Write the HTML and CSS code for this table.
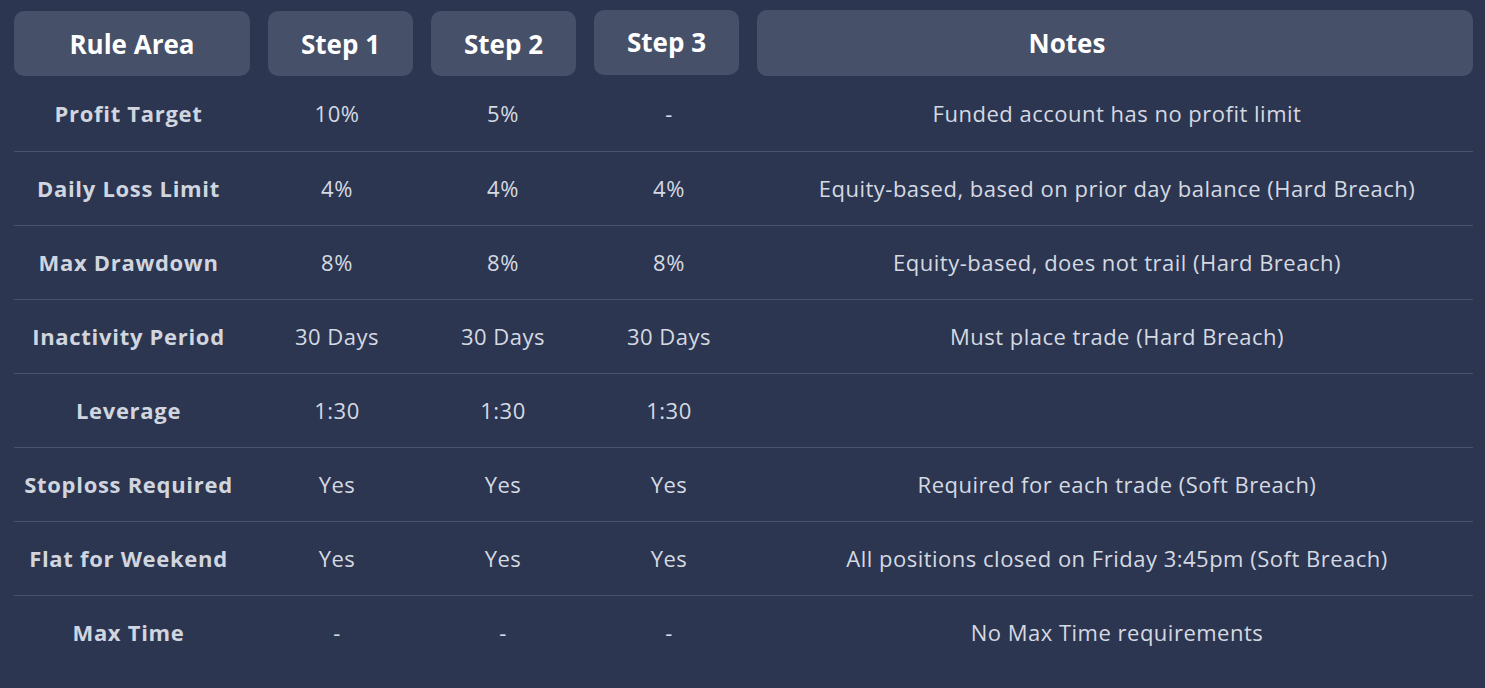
FILE: index.html
```html
<!DOCTYPE html>
<html>
<head>
<meta charset="utf-8">
<link rel="stylesheet" href="styles.css">
</head>
<body>
<div class="page">
  <div class="head">
    <div class="hcell h-rule">Rule Area</div>
    <div class="hcell h-step">Step 1</div>
    <div class="hcell h-step">Step 2</div>
    <div class="hcell h-step h-up">Step 3</div>
    <div class="hcell h-notes">Notes</div>
  </div>
  <div class="rows">
    <div class="row first"><div class="c lab">Profit Target</div><div class="c">10%</div><div class="c">5%</div><div class="c">-</div><div class="c note">Funded account has no profit limit</div></div>
    <div class="row"><div class="c lab">Daily Loss Limit</div><div class="c">4%</div><div class="c">4%</div><div class="c">4%</div><div class="c note">Equity-based, based on prior day balance (Hard Breach)</div></div>
    <div class="row"><div class="c lab">Max Drawdown</div><div class="c">8%</div><div class="c">8%</div><div class="c">8%</div><div class="c note">Equity-based, does not trail (Hard Breach)</div></div>
    <div class="row"><div class="c lab">Inactivity Period</div><div class="c">30 Days</div><div class="c">30 Days</div><div class="c">30 Days</div><div class="c note">Must place trade (Hard Breach)</div></div>
    <div class="row"><div class="c lab">Leverage</div><div class="c">1:30</div><div class="c">1:30</div><div class="c">1:30</div><div class="c note"></div></div>
    <div class="row"><div class="c lab">Stoploss Required</div><div class="c">Yes</div><div class="c">Yes</div><div class="c">Yes</div><div class="c note">Required for each trade (Soft Breach)</div></div>
    <div class="row"><div class="c lab">Flat for Weekend</div><div class="c">Yes</div><div class="c">Yes</div><div class="c">Yes</div><div class="c note">All positions closed on Friday 3:45pm (Soft Breach)</div></div>
    <div class="row last"><div class="c lab">Max Time</div><div class="c">-</div><div class="c">-</div><div class="c">-</div><div class="c note">No Max Time requirements</div></div>
  </div>
</div>
</body>
</html>
```

FILE: styles.css
```css
html, body {
  margin: 0;
  padding: 0;
  background: #2c3650;
  height: 100%;
}
body {
  font-family: "Open Sans", "DejaVu Sans", sans-serif;
  color: #d3d8e2;
}
.page {
  padding: 10px 12px 0 14px;
}
.head {
  display: flex;
  gap: 18px;
  align-items: flex-start;
}
.hcell {
  background: #465069;
  border-radius: 10px;
  height: 65px;
  margin-top: 1px;
  display: flex;
  align-items: center;
  justify-content: center;
  color: #ffffff;
  font-weight: 700;
  font-size: 26px;
}
.h-rule { width: 236px; }
.h-step { width: 145px; }
.h-up { margin-top: 0; padding-bottom: 2px; height: 63px; }
.h-notes { flex: 1; padding-right: 96px; margin-top: 0; height: 66px; }
.rows {
  display: flex;
  flex-direction: column;
}
.row {
  display: grid;
  grid-template-columns: 240px 166px 166px 166px 1fr;
  height: 71px;
  padding-bottom: 2px;
  border-bottom: 1px solid #4a5469;
  align-items: center;
}
.row.first { height: 72px; padding-top: 1px; }
.row.last { border-bottom: none; }
.c {
  text-align: center;
  font-size: 22px;
  letter-spacing: 0.5px;
  color: #d5d9e2;
}
.lab {
  font-weight: 700;
  letter-spacing: 0.7px;
  padding-right: 11px;
  color: #d0d5df;
}
.note { padding-left: 9px; }
```
